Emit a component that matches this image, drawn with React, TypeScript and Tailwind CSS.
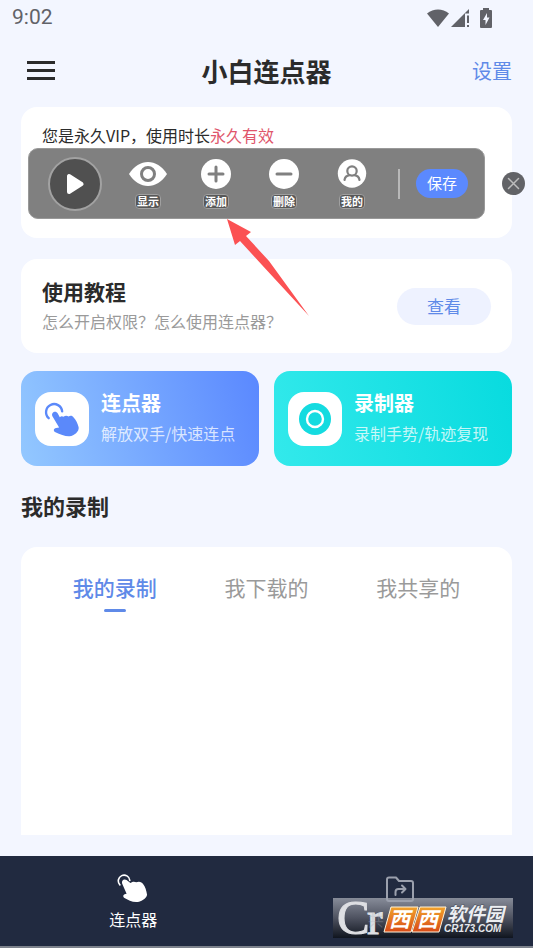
import React from 'react';

const HandIcon: React.FC<{ className?: string }> = ({ className }) => (
  <svg viewBox="0 0 110 110" className={className} fill="none" aria-hidden="true">
    <path d="M14 54A24 24 0 1 1 54 34" stroke="currentColor" strokeWidth="7" strokeLinecap="round" />
    <path
      d="M25 48C20 37 35 29 41 40L47 51C51 47 55 48 58 50C63 45 69 46 73 49C78 45 85 46 88 52C94 58 100 69 103 81C105 94 90 106 76 108C64 109 48 102 34 96C27 92 28 84 36 83L45 82Z"
      fill="currentColor"
    />
  </svg>
);

const SolidHandIcon: React.FC<{ className?: string }> = ({ className }) => (
  <svg viewBox="0 0 100 100" className={className} fill="none" aria-hidden="true">
    <path d="M9 37A18 18 0 1 1 40 23" stroke="currentColor" strokeWidth="5" strokeLinecap="round" />
    <path
      d="M17 35C12 24 22 17 30 22L42 31C50 25 56 27 60 29C68 25 78 27 82 35C88 42 92 55 94 68C92 80 75 91 60 91C46 90 34 84 22 77C17 72 20 66 30 65Z"
      fill="currentColor"
    />
  </svg>
);

const StatusBar: React.FC = () => (
  <div className="flex h-9 items-center justify-between pl-3 pr-[41px] text-[#616268]">
    <span className="font-[Roboto] text-[21px]">9:02</span>
    <div className="flex items-center gap-0.5">
      <svg viewBox="0 0 22 18" className="h-[18px] w-[22px]" fill="currentColor" aria-hidden="true">
        <path d="M0 4.500C6.500-1 15.500-1 22 4.500L11 18Z" />
      </svg>
      <svg viewBox="0 0 19 18" className="h-[18px] w-[19px]" fill="currentColor" aria-hidden="true">
        <path d="M0 18L18 0V4.500H14V18ZM16 6.500H18V14H16ZM16 16H18V18H16Z" />
      </svg>
      <svg viewBox="0 0 12 20" className="ml-2 h-5 w-3" aria-hidden="true">
        <path
          fill="currentColor"
          fillRule="evenodd"
          d="M3 0H9V2H11Q12 2 12 3V19Q12 20 11 20H1Q0 20 0 19V3Q0 2 1 2H3ZM7 5L3 12H5.500V17L9.500 9.500H7Z"
        />
      </svg>
    </div>
  </div>
);

const tools = [
  {
    label: '显示',
    icon: (
      <svg viewBox="0 0 38 30" className="h-[30px] w-[38px]" aria-hidden="true">
        <path d="M0 15C10-1 28-1 38 15C28 31 10 31 0 15Z" fill="#fff" />
        <circle cx="19" cy="15" r="6.5" fill="none" stroke="#808080" strokeWidth="3" />
      </svg>
    ),
  },
  {
    label: '添加',
    icon: (
      <svg viewBox="0 0 30 30" className="size-[30px]" aria-hidden="true">
        <circle cx="15" cy="15" r="15" fill="#fff" />
        <path d="M8 15H22M15 8V22" stroke="#808080" strokeWidth="3" strokeLinecap="round" />
      </svg>
    ),
  },
  {
    label: '删除',
    icon: (
      <svg viewBox="0 0 30 30" className="size-[30px]" aria-hidden="true">
        <circle cx="15" cy="15" r="15" fill="#fff" />
        <path d="M8 15H22" stroke="#808080" strokeWidth="3" strokeLinecap="round" />
      </svg>
    ),
  },
  {
    label: '我的',
    icon: (
      <svg viewBox="0 0 30 30" className="size-[30px]" aria-hidden="true">
        <circle cx="15" cy="14.500" r="14.200" fill="#fff" />
        <circle cx="15" cy="12" r="4.700" fill="none" stroke="#808080" strokeWidth="2.200" />
        <path d="M7.500 21C8 17.500 10.500 16.500 12.500 16.200M17.500 16.200C19.500 16.500 22 17.500 22.500 21" fill="none" stroke="#808080" strokeWidth="2.200" strokeLinecap="round" />
      </svg>
    ),
  },
];

const FloatingToolbar: React.FC = () => (
  <div className="absolute left-[7px] right-[27px] top-[41px] flex h-[71px] items-center justify-between rounded-[10px] border border-[#999] bg-[#808080] pl-[19px] pr-4">
    <button aria-label="播放" className="flex size-[54px] items-center justify-center rounded-full border-2 border-[#a2a2a2] bg-[#505050]">
      <svg viewBox="0 0 18 22" className="h-[22px] w-[18px]" aria-hidden="true">
        <path d="M3 3V19L15.500 11Z" fill="#fff" stroke="#fff" strokeWidth="4" strokeLinejoin="round" />
      </svg>
    </button>
    <div className="flex gap-[30px]">
      {tools.map((tool) => (
        <button key={tool.label} className="flex w-[38px] flex-col items-center gap-[5px]">
          {tool.icon}
          <span className="rounded-sm border border-[#a0a0a0] bg-[#585858] px-px text-[11px] font-bold leading-[13px] text-white">
            {tool.label}
          </span>
        </button>
      ))}
    </div>
    <div className="flex items-center gap-4">
      <span className="h-[30px] w-0.5 bg-[#b8b8b8]" />
      <button className="h-[29px] w-[52px] rounded-full bg-[#5b89fe] text-[15px] text-white">保存</button>
    </div>
  </div>
);

const Watermark: React.FC = () => (
  <svg viewBox="0 0 180 40" className="h-10 w-[180px] overflow-visible" role="img" aria-label="西西软件园">
    <defs>
      <linearGradient id="wm-bg" x2="0" y2="1">
        <stop offset="0" stopColor="#878c99" />
        <stop offset="0.5" stopColor="#4e5260" />
        <stop offset="1" stopColor="#10151f" />
      </linearGradient>
      <linearGradient id="wm-tile" x2="0" y2="1">
        <stop offset="0" stopColor="#f1a32c" />
        <stop offset="1" stopColor="#d84a17" />
      </linearGradient>
    </defs>
    <rect width="180" height="40" fill="url(#wm-bg)" />
    <g fontFamily="Liberation Serif, serif" fill="#dedfe3" stroke="#dedfe3">
      <text x="4" y="36" fontSize="49">C</text>
      <text x="34" y="36" fontSize="47">r</text>
    </g>
    <g fill="url(#wm-tile)" stroke="#fff3dc" strokeWidth="1">
      <path d="M58 9H85L78 34H51Z" />
      <path d="M87 9H113L106 34H79Z" />
    </g>
    <g fill="#fff" fontFamily="Noto Sans CJK SC, sans-serif" fontWeight="bold" fontStyle="italic">
      <text x="56" y="29" fontSize="21">西</text>
      <text x="84" y="29" fontSize="21">西</text>
      <text x="114" y="23" fontSize="19" fill="#eceef2" stroke="#4b4f5b" strokeWidth="1" paintOrder="stroke">软件园</text>
    </g>
    <text x="111" y="34" fontFamily="Liberation Sans, sans-serif" fontSize="10" fontWeight="bold" fontStyle="italic" fill="#e6e8ec">CR173.COM</text>
  </svg>
);

const App: React.FC = () => {
  return (
    <div className="flex min-h-screen flex-col bg-[#f3f6ff] font-['Noto_Sans_CJK_SC',sans-serif] text-[#2b2b2b]">
      <StatusBar />

      <header className="grid h-[71px] grid-cols-3 items-center px-[21px] pb-0.5">
        <button aria-label="菜单" className="ml-1.5 flex w-7 flex-col gap-[5px]">
          <span className="h-[3px] bg-[#2b2b2b]" />
          <span className="h-[3px] bg-[#2b2b2b]" />
          <span className="h-[3px] bg-[#2b2b2b]" />
        </button>
        <h1 className="whitespace-nowrap text-center text-[26px] font-bold">小白连点器</h1>
        <a href="#settings" className="text-right text-xl text-[#5f8ae8]">设置</a>
      </header>

      <main className="flex flex-1 flex-col px-[21px]">
        <section className="relative h-[131px] rounded-2xl bg-white px-[21px] pt-4">
          <p className="text-base">
            您是永久VIP，使用时长<span className="text-[#e0566b]">永久有效</span>
          </p>
          <FloatingToolbar />
          <button aria-label="关闭" className="absolute -right-[13px] top-[65px] size-[23px] rounded-full bg-[#626367]">
            <svg viewBox="0 0 23 23" className="size-[23px]" aria-hidden="true">
              <path d="M6.500 6.500L16.500 16.500M16.500 6.500L6.500 16.500" stroke="#bdbdbd" strokeWidth="1.500" strokeLinecap="round" />
            </svg>
          </button>
        </section>

        <section className="relative mt-[21px] flex h-[94px] items-center justify-between rounded-2xl bg-white px-[21px]">
          <div className="pb-[3px]">
            <h2 className="text-[21px] font-bold leading-8">使用教程</h2>
            <p className="text-base leading-7 text-[#9a9a9a]">怎么开启权限？怎么使用连点器？</p>
          </div>
          <button className="h-[37px] w-[94px] rounded-full bg-[#eef2ff] text-[17px] text-[#5f8ae8]">查看</button>
          {/* pointer to the add button */}
          <svg viewBox="0 0 84 98" className="absolute -top-10 left-[205px] h-[98px] w-[84px]" aria-hidden="true">
            <path d="M1 0L25 13L20 17L43 42L83 97L36 46L14 22L9 26Z" fill="#fb5153" />
          </svg>
        </section>

        <div className="mt-[18px] grid grid-cols-2 gap-[15px]">
          <button className="flex h-[95px] items-center gap-3 rounded-2xl bg-linear-[75deg] from-[#93c8ff] to-[#5a88ff] pl-[14px] text-left text-white">
            <span className="flex size-[54px] items-center justify-center rounded-2xl bg-white">
              <HandIcon className="size-[37px] text-[#5b89fa]" />
            </span>
            <span className="pb-[3px]">
              <span className="block text-xl font-bold leading-8">连点器</span>
              <span className="block text-base leading-7 text-white/75">解放双手/快速连点</span>
            </span>
          </button>
          <button className="flex h-[95px] items-center gap-3 rounded-2xl bg-linear-[75deg] from-[#33e9eb] to-[#08dbdf] pl-[14px] text-left text-white">
            <span className="flex size-[54px] items-center justify-center rounded-2xl bg-white">
              <svg viewBox="0 0 32 32" className="size-8" aria-hidden="true">
                <circle cx="16" cy="16" r="16" fill="#14dbe0" />
                <circle cx="16" cy="16" r="8" fill="none" stroke="#fff" strokeWidth="2.400" />
              </svg>
            </span>
            <span className="pb-[3px]">
              <span className="block text-xl font-bold leading-8">录制器</span>
              <span className="block text-base leading-7 text-white/75">录制手势/轨迹复现</span>
            </span>
          </button>
        </div>

        <h2 className="mt-[21px] text-[22px] font-bold leading-9">我的录制</h2>

        <section className="mb-[21px] mt-6 flex-1 rounded-t-2xl bg-white px-[18px] pt-6">
          <div role="tablist" className="grid grid-cols-3 text-[21px] leading-8 text-[#9a9a9a]">
            <button role="tab" aria-selected="true" className="flex flex-col items-center gap-1.5 font-medium text-[#5f8ae8]">
              我的录制
              <span className="h-[3px] w-[22px] rounded-full bg-[#5f8ae8]" />
            </button>
            <button role="tab" aria-selected="false" className="self-start">我下载的</button>
            <button role="tab" aria-selected="false" className="self-start">我共享的</button>
          </div>
        </section>
      </main>

      <nav className="relative grid h-[92px] grid-cols-2 border-b-2 border-[#7d828c] bg-[#212a40] pt-[17px] text-base text-white">
        <a href="#clicker" className="flex flex-col items-center gap-0.5">
          <SolidHandIcon className="size-8" />
          连点器
        </a>
        <div className="absolute bottom-2 right-5">
          <Watermark />
        </div>
        <a href="#share" className="relative flex flex-col items-center gap-0.5">
          <svg viewBox="0 0 32 32" className="size-8 text-[#9ba0ad]" fill="none" stroke="currentColor" strokeWidth="2" strokeLinejoin="round" strokeLinecap="round" aria-hidden="true">
            <path d="M3 26V6.500Q3 4.500 5 4.500H12L15 8H27Q29 8 29 10V26Q29 28 27 28H5Q3 28 3 26Z" />
            <path d="M11.500 22V19Q11.500 16 14.500 16H21M18 12.500L21.500 16L18 19.500" />
          </svg>
          <span className="w-16 text-[#a6abb6]/30">共</span>
        </a>
      </nav>
    </div>
  );
};

export default App;
